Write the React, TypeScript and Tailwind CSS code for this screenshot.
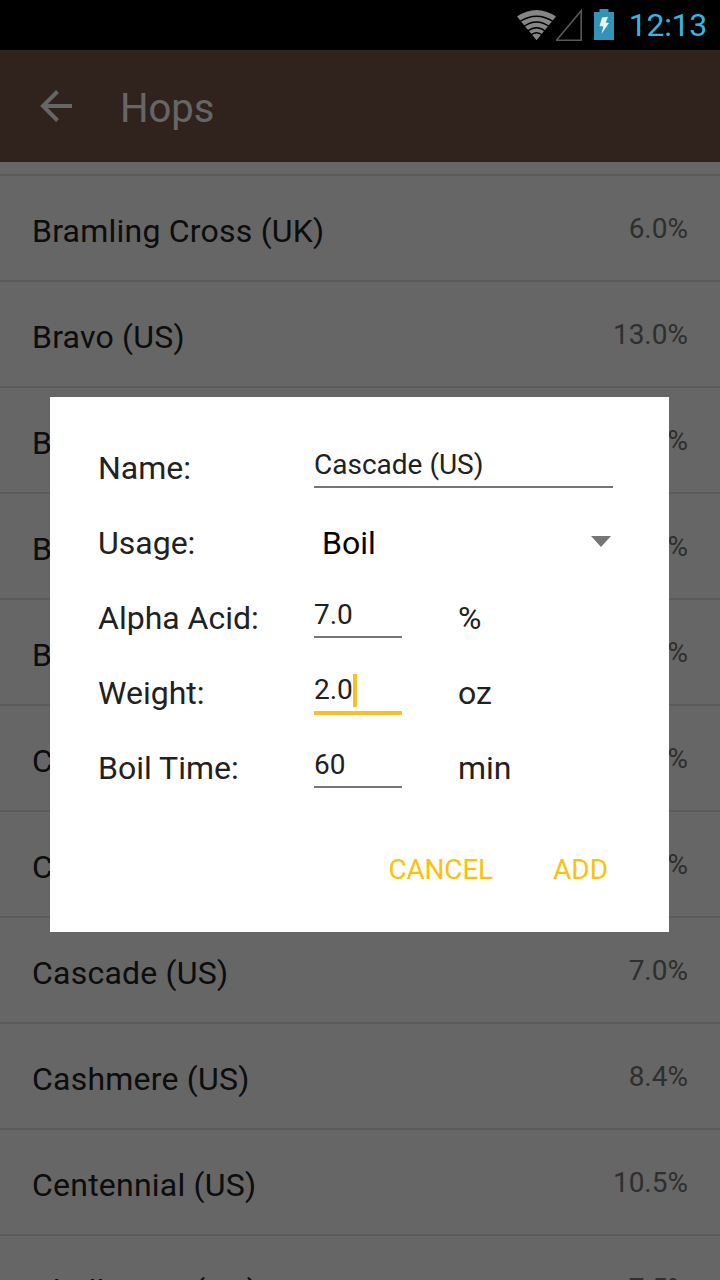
import type { ReactNode } from "react";

const hops = [
  { name: "Bramling Cross (UK)", alpha: "6.0%" },
  { name: "Bravo (US)", alpha: "13.0%" },
  { name: "Brewer's Gold (UK)", alpha: "7.0%" },
  { name: "British Kent (UK)", alpha: "5.5%" },
  { name: "Bullion (US)", alpha: "8.0%" },
  { name: "Calypso (US)", alpha: "13.0%" },
  { name: "Cantillon (US)", alpha: "4.8%" },
  { name: "Cascade (US)", alpha: "7.0%" },
  { name: "Cashmere (US)", alpha: "8.4%" },
  { name: "Centennial (US)", alpha: "10.5%" },
  { name: "Challenger (UK)", alpha: "7.5%" },
];

function StatusBar() {
  return (
    <header className="flex h-[50px] shrink-0 items-center justify-end bg-black pr-[13px]">
      <svg className="h-[50px] w-[39px]" viewBox="0 0 39 50">
        <path d="M19.5 40.300 L0 16.5 Q19.5 3.5 39 16.5 Z" fill="#868686" />
        <g fill="none" stroke="#000" strokeWidth="1.3">
          <path d="M2 22 Q19.5 10.5 37 22" />
          <path d="M6 27 Q19.5 17 33 27" />
          <path d="M10 31.5 Q19.5 24 29 31.5" />
          <path d="M13 35.5 Q19.5 30 26 35.5" />
        </g>
      </svg>
      <svg className="h-[50px] w-[27px]" viewBox="0 0 27 50">
        <path d="M0.5 40.2 H25.2 V10.8 Z" fill="none" stroke="#585858" strokeWidth="1.6" />
      </svg>
      <svg className="ml-[10px] h-[50px] w-[21px]" viewBox="0 0 21 50">
        <path d="M1 12 H6.500 V9 H15.500 V12 H21 V40 H1 Z" fill="#3393b8" />
        <path d="M9 17.500 L15 16.700 L12.800 22.500 L16 23 L8.500 34 L10.300 26.500 L6.500 26 Z" fill="#e4f4fa" />
      </svg>
      <span className="ml-[15px] text-[32px] leading-[52px] tracking-[-0.3px] text-[#33b5e5]">12:13</span>
    </header>
  );
}

function AppBar() {
  return (
    <div className="flex h-28 shrink-0 items-center bg-[#795548] pl-10 text-white">
      <svg className="h-8 w-8" viewBox="0 0 32 32" fill="none" stroke="currentColor" strokeWidth="4">
        <path d="M32 16 H3 M17.500 1.500 L3 16 L17.500 30.500" />
      </svg>
      <h1 className="ml-12 pt-[6px] text-[40px] leading-[48px]">Hops</h1>
    </div>
  );
}

function Field({ value, wide, focused }: { value: string; wide?: boolean; focused?: boolean }) {
  return (
    <div className={`flex flex-col ${wide ? "col-span-2 w-[299px]" : "w-[88px]"}`}>
      <div className="flex h-[46px] items-center pt-[4px]">
        <span className="whitespace-nowrap text-[28px] leading-[34px]">{value}</span>
        {focused && <span className="mt-px h-[33px] w-1 shrink-0 bg-[#f9bf26]" />}
      </div>
      <div className={focused ? "h-1 bg-[#f9bf26]" : "h-0.5 bg-[#757575]"} />
    </div>
  );
}

function FormRow({ label, children }: { label: string; children: ReactNode }) {
  return (
    <div className="grid h-[75px] grid-cols-[216px_144px_1fr] items-start pt-[12px] text-[32px] leading-[56px]">
      <span>{label}</span>
      {children}
    </div>
  );
}

function AddHopDialog() {
  return (
    <section className="h-[535px] w-[619px] bg-white pl-12 pt-[31px] text-[#212121]">
      <FormRow label="Name:">
        <Field value="Cascade (US)" wide />
      </FormRow>
      <FormRow label="Usage:">
        <div className="col-span-2 flex w-[299px] items-center justify-between pl-2 pr-[2px] text-black">
          <span>Boil</span>
          <svg className="-mt-[3px] h-[11px] w-5" viewBox="0 0 20 11">
            <path d="M0 0 H20 L10 11 Z" fill="#757575" />
          </svg>
        </div>
      </FormRow>
      <FormRow label="Alpha Acid:">
        <Field value="7.0" />
        <span>%</span>
      </FormRow>
      <FormRow label="Weight:">
        <Field value="2.0" focused />
        <span>oz</span>
      </FormRow>
      <FormRow label="Boil Time:">
        <Field value="60" />
        <span>min</span>
      </FormRow>
      <div className="mt-[43px] flex justify-end gap-[60px] pr-[61px] text-[28px] leading-[48px] text-[#ffc107]">
        <button className="tracking-[-0.2px]">CANCEL</button>
        <button>ADD</button>
      </div>
    </section>
  );
}

export default function App() {
  return (
    <div className="relative flex h-[1280px] w-[720px] flex-col overflow-hidden bg-white font-['Roboto',sans-serif]">
      <StatusBar />
      <AppBar />
      <main className="min-h-0 flex-1 overflow-hidden">
        <div className="h-[14px] border-b-2 border-[#e3e3e3]" />
        {hops.map((hop) => (
          <div key={hop.name} className="flex h-[106px] items-center justify-between border-b-2 border-[#e3e3e3] px-8">
            <span className="pt-[5px] text-[32px] leading-[40px] tracking-[0.22px] text-[#212121]">{hop.name}</span>
            <span className="pt-[2px] text-[28px] leading-[36px] text-[#757575]">{hop.alpha}</span>
          </div>
        ))}
      </main>
      <div className="absolute inset-x-0 bottom-0 top-[50px] bg-black/60 pl-[50px] pt-[347px]">
        <AddHopDialog />
      </div>
    </div>
  );
}
